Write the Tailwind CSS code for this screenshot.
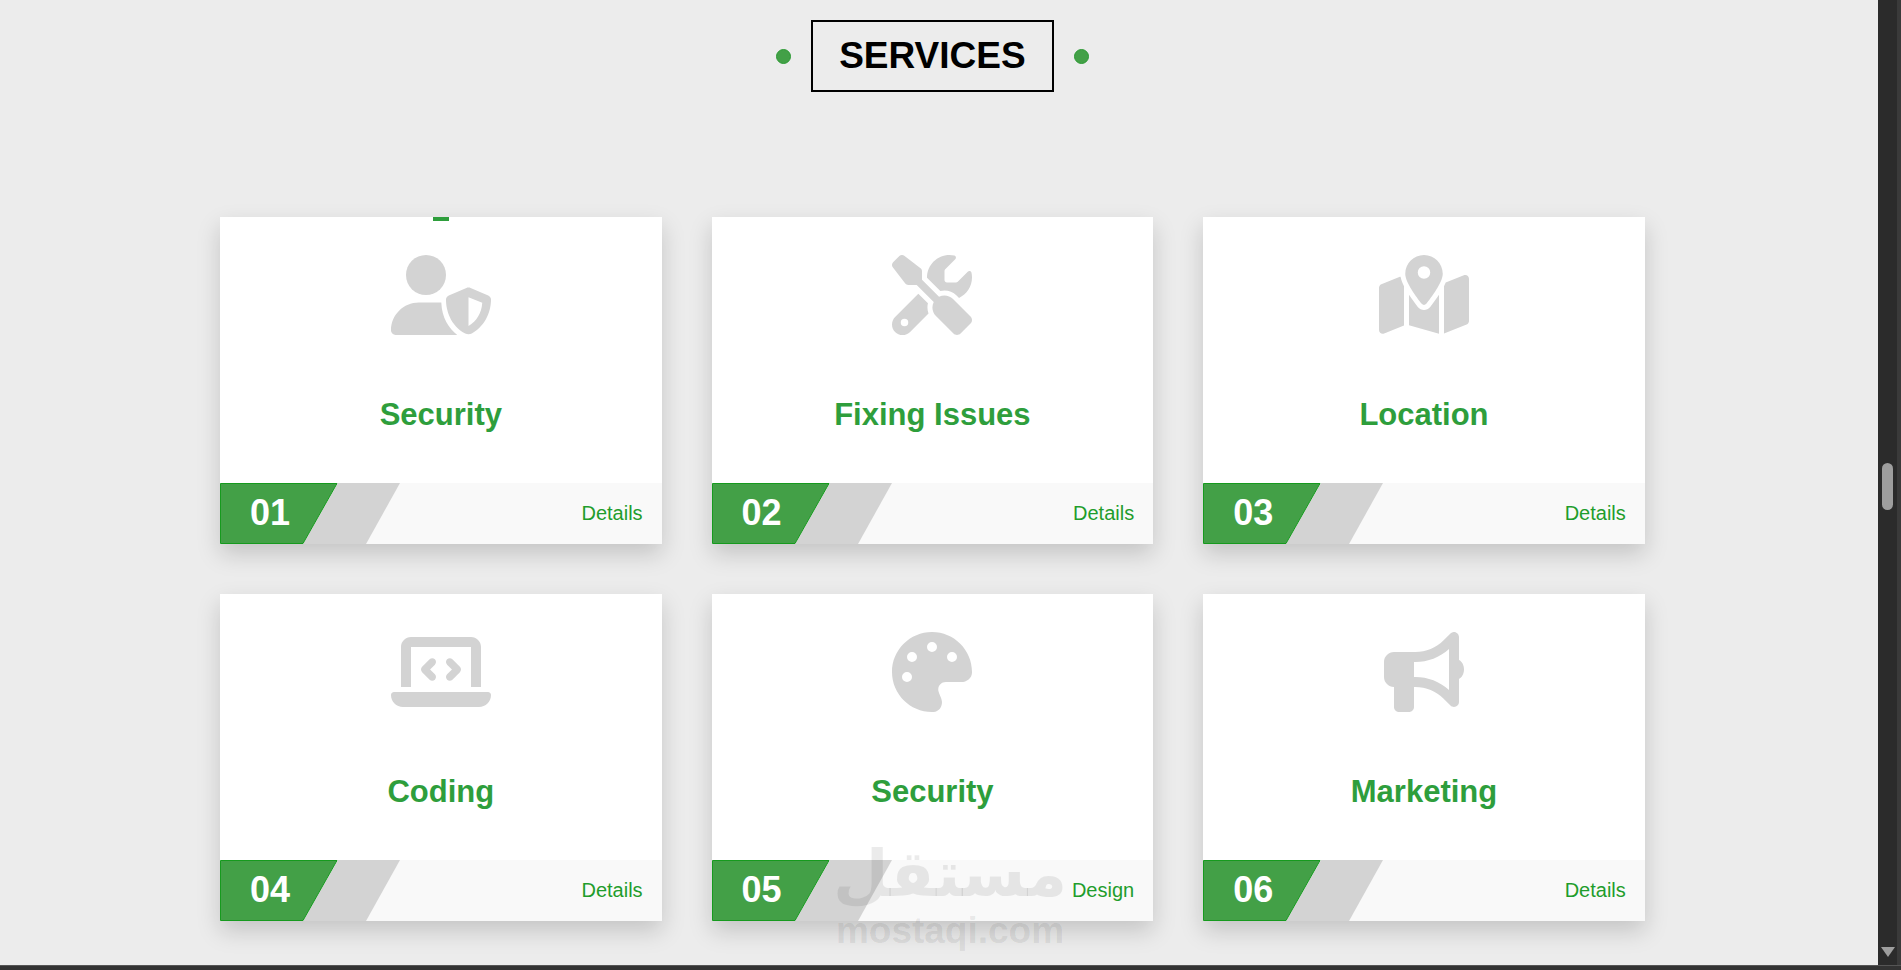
<!DOCTYPE html>
<html lang="en">
  <head>
    <meta charset="UTF-8">
    <meta name="viewport" content="width=device-width, initial-scale=1.0">
    <title>Services</title>
    <script src="https://cdn.jsdelivr.net/npm/@tailwindcss/browser@4"></script>
  </head>
  <body class="h-screen overflow-hidden flex flex-col bg-[#ececec] font-['Liberation_Sans',Arial,sans-serif]">
    <!-- shared footer badge -->
    <svg class="hidden">
      <symbol id="badge" viewBox="0 0 180 61">
        <polygon points="118,0 180,0 146,61 83,61" fill="#d3d3d3"></polygon>
        <polygon points="0.5,0.5 117,0.5 83,60.5 0.5,60.5" fill="#43a047" stroke="#169a1e"></polygon>
      </symbol>
    </svg>

    <div class="flex-1 flex min-h-0">
      <main class="relative flex-1 pl-[220px] pt-5">
        <!-- heading -->
        <div class="w-[1424.8px] flex items-center justify-center gap-5">
          <span class="w-[15px] h-[15px] rounded-full bg-[#43a047] border border-[#2b9a33]"></span>
          <h1 class="w-[243px] h-[72px] border-2 border-black flex items-center justify-center text-[37px] font-bold text-black">SERVICES</h1>
          <span class="w-[15px] h-[15px] rounded-full bg-[#43a047] border border-[#2b9a33]"></span>
        </div>

        <div class="mt-[125px] grid grid-cols-[repeat(3,441.6px)] auto-rows-[327px] gap-x-[50px] gap-y-[50px]">
          <!-- 01 -->
          <article class="relative bg-white flex flex-col items-center shadow-[0_10px_22px_rgba(0,0,0,0.17)]">
            <span class="absolute top-0 left-1/2 -translate-x-1/2 w-4 h-1 bg-[#2e9e3c]"></span>
            <svg class="mt-[38px] h-20 w-[100px] fill-[#d3d3d3]" viewBox="0 0 640 512">
              <circle cx="224" cy="128" r="128"></circle>
              <path d="M178.3 304C79.8 304 0 383.8 0 482.3 0 498.7 13.3 512 29.7 512H424C370 470 325 400 322 304Z"></path>
              <path fill-rule="evenodd" d="M496 208c4.600 0 9.200 1 13.400 2.900L622 259c11 4.700 18 15 18 27 0 60-25 160-123 216-13 7-29 7-42 0C378 450 352 350 352 286c0-12 7-22.300 18-27l112.600-48.100c4.200-1.900 8.800-2.900 13.400-2.900zM496 271v183c53-30 84-84 88-148z"></path>
            </svg>
            <h2 class="mt-[62px] text-[31px] leading-9 font-bold text-[#2e9e3c]">Security</h2>
            <div class="relative mt-auto w-full h-[61px] bg-[#f9f9f9] flex items-center justify-between pl-[30px] pr-[19px] pb-[2px]">
              <svg class="absolute left-0 top-0 w-[180px] h-[61px]"><use href="#badge"></use></svg>
              <span class="relative text-[36px] font-bold text-white">01</span>
              <a class="text-[20px] text-[#1f9d2c]">Details</a>
            </div>
          </article>

          <!-- 02 -->
          <article class="relative bg-white flex flex-col items-center shadow-[0_10px_22px_rgba(0,0,0,0.17)]">
            <svg class="mt-[38px] h-20 w-20 fill-[#d3d3d3]" viewBox="0 0 512 512">
              <path d="M78.6 5C69.1-2.4 55.6-1.5 47 7L7 47c-8.500 8.500-9.400 22-2.100 31.600l80 104c4.500 5.900 11.600 9.400 19 9.400h54.100l109 109c-14.700 29-10 65.400 14.300 89.600l112 112c12.500 12.500 32.800 12.500 45.300 0l64-64c12.500-12.500 12.500-32.800 0-45.300l-112-112c-24.200-24.200-60.600-29-89.600-14.300l-109-109V104c0-7.500-3.500-14.500-9.400-19L78.600 5zM19.900 396.100C7.200 408.800 0 426.100 0 444.100C0 481.600 30.400 512 67.900 512c18 0 35.300-7.200 48-19.900L233.700 374.300c-7.800-20.900-9-43.600-3.600-65.100l-61.700-61.700L19.900 396.100zM512 144c0-10.500-1.100-20.700-3.200-30.500c-2.400-11.200-16.100-14.100-24.200-6l-63.900 63.900c-3 3-7.100 4.700-11.300 4.700H352c-8.800 0-16-7.200-16-16V102.600c0-4.200 1.700-8.300 4.700-11.300l63.900-63.900c8.100-8.100 5.200-21.800-6-24.200C388.700 1.100 378.500 0 368 0C288.500 0 224 64.500 224 144l0 .8 85.300 85.300c36-9.100 75.800 .5 104 28.700L429 274.500c49-23 83-72.800 83-130.500zM56 432a24 24 0 1 1 48 0 24 24 0 1 1 -48 0z"></path>
            </svg>
            <h2 class="mt-[62px] text-[31px] leading-9 font-bold text-[#2e9e3c]">Fixing Issues</h2>
            <div class="relative mt-auto w-full h-[61px] bg-[#f9f9f9] flex items-center justify-between pl-[30px] pr-[19px] pb-[2px]">
              <svg class="absolute left-0 top-0 w-[180px] h-[61px]"><use href="#badge"></use></svg>
              <span class="relative text-[36px] font-bold text-white">02</span>
              <a class="text-[20px] text-[#1f9d2c]">Details</a>
            </div>
          </article>

          <!-- 03 -->
          <article class="relative bg-white flex flex-col items-center shadow-[0_10px_22px_rgba(0,0,0,0.17)]">
            <svg class="mt-[38px] h-20 w-[90px] fill-[#d3d3d3]" viewBox="0 0 576 512">
              <path d="M408 120c0 54.600-73.100 151.900-105.200 192c-7.700 9.600-22 9.600-29.600 0C241.100 271.900 168 174.600 168 120C168 53.700 221.700 0 288 0s120 53.700 120 120zm8 80.400c3.500-6.900 6.700-13.800 9.600-20.600c.5-1.200 1-2.500 1.500-3.700l116-46.400C558.900 123.400 576 135 576 152V422.800c0 9.800-6 18.600-15.100 22.300L416 503V200.400zM137.600 138.300c2.400 14.100 7.200 28.300 12.800 41.500c2.900 6.800 6.100 13.700 9.600 20.600V451.800L32.900 502.700C17.100 509 0 497.400 0 480.400V209.600c0-9.800 6-18.600 15.100-22.300l122.600-49zM327.800 332c13.900-17.400 35.700-45.700 56.200-77V504.300L192 449.400V255c20.500 31.300 42.300 59.600 56.200 77c20.500 25.600 59.100 25.600 79.600 0zM288 152a40 40 0 1 0 0-80 40 40 0 1 0 0 80z"></path>
            </svg>
            <h2 class="mt-[62px] text-[31px] leading-9 font-bold text-[#2e9e3c]">Location</h2>
            <div class="relative mt-auto w-full h-[61px] bg-[#f9f9f9] flex items-center justify-between pl-[30px] pr-[19px] pb-[2px]">
              <svg class="absolute left-0 top-0 w-[180px] h-[61px]"><use href="#badge"></use></svg>
              <span class="relative text-[36px] font-bold text-white">03</span>
              <a class="text-[20px] text-[#1f9d2c]">Details</a>
            </div>
          </article>

          <!-- 04 -->
          <article class="relative bg-white flex flex-col items-center shadow-[0_10px_22px_rgba(0,0,0,0.17)]">
            <svg class="mt-[38px] h-20 w-[100px] fill-[#d3d3d3]" viewBox="0 0 640 512">
              <path d="M64 96c0-35.300 28.700-64 64-64H512c35.300 0 64 28.700 64 64V352H512V96H128V352H64V96zM0 403.200C0 392.600 8.600 384 19.200 384H620.800c10.600 0 19.200 8.600 19.200 19.200c0 42.400-34.400 76.800-76.800 76.800H76.800C34.400 480 0 445.600 0 403.200zM281 209l-31 31 31 31c9.400 9.400 9.400 24.600 0 33.900s-24.600 9.400-33.900 0l-48-48c-9.400-9.400-9.400-24.600 0-33.900l48-48c9.400-9.400 24.600-9.400 33.900 0s9.400 24.600 0 33.900zM393 175l48 48c9.400 9.400 9.400 24.600 0 33.900l-48 48c-9.400 9.400-24.600 9.400-33.900 0s-9.400-24.600 0-33.900l31-31-31-31c-9.400-9.400-9.400-24.600 0-33.900s24.600-9.400 33.900 0z"></path>
            </svg>
            <h2 class="mt-[62px] text-[31px] leading-9 font-bold text-[#2e9e3c]">Coding</h2>
            <div class="relative mt-auto w-full h-[61px] bg-[#f9f9f9] flex items-center justify-between pl-[30px] pr-[19px] pb-[2px]">
              <svg class="absolute left-0 top-0 w-[180px] h-[61px]"><use href="#badge"></use></svg>
              <span class="relative text-[36px] font-bold text-white">04</span>
              <a class="text-[20px] text-[#1f9d2c]">Details</a>
            </div>
          </article>

          <!-- 05 -->
          <article class="relative bg-white flex flex-col items-center shadow-[0_10px_22px_rgba(0,0,0,0.17)]">
            <svg class="mt-[38px] h-20 w-20 fill-[#d3d3d3]" viewBox="0 0 512 512">
              <path d="M512 256c0 .9 0 1.800 0 2.700c-.4 36.500-33.600 61.300-70.100 61.300H344c-26.500 0-48 21.500-48 48c0 3.400 .4 6.700 1 9.900c2.100 10.200 6.500 20 10.800 29.900c6.100 13.800 12.100 27.500 12.100 42c0 31.800-21.600 60.700-53.400 62c-3.500 .1-7 .2-10.600 .2C114.600 512 0 397.400 0 256S114.600 0 256 0S512 114.600 512 256zM128 288a32 32 0 1 0 -64 0 32 32 0 1 0 64 0zm0-96a32 32 0 1 0 0-64 32 32 0 1 0 0 64zM288 96a32 32 0 1 0 -64 0 32 32 0 1 0 64 0zm96 96a32 32 0 1 0 0-64 32 32 0 1 0 0 64z"></path>
            </svg>
            <h2 class="mt-[62px] text-[31px] leading-9 font-bold text-[#2e9e3c]">Security</h2>
            <div class="relative mt-auto w-full h-[61px] bg-[#f9f9f9] flex items-center justify-between pl-[30px] pr-[19px] pb-[2px]">
              <svg class="absolute left-0 top-0 w-[180px] h-[61px]"><use href="#badge"></use></svg>
              <span class="relative text-[36px] font-bold text-white">05</span>
              <a class="text-[20px] text-[#1f9d2c]">Design</a>
            </div>
          </article>

          <!-- 06 -->
          <article class="relative bg-white flex flex-col items-center shadow-[0_10px_22px_rgba(0,0,0,0.17)]">
            <svg class="mt-[38px] h-20 w-20 fill-[#d3d3d3]" viewBox="0 0 512 512">
              <path d="M480 32c0-12.900-7.800-24.600-19.800-29.600s-25.700-2.200-34.900 6.900L381.700 53c-48 48-113.100 75-181 75H192 160 64c-35.300 0-64 28.700-64 64v96c0 35.300 28.700 64 64 64l0 128c0 17.700 14.300 32 32 32h64c17.700 0 32-14.300 32-32V352l8.700 0c67.900 0 133 27 181 75l43.600 43.600c9.200 9.200 22.900 11.900 34.900 6.900s19.800-16.600 19.800-29.600V300.400c18.600-8.800 32-32.500 32-60.400s-13.400-51.600-32-60.400V32zm-64 76.700V240 371.300C357.200 317.800 280.500 288 200.700 288H192V192h8.700c79.800 0 156.500-29.800 215.300-83.300z"></path>
            </svg>
            <h2 class="mt-[62px] text-[31px] leading-9 font-bold text-[#2e9e3c]">Marketing</h2>
            <div class="relative mt-auto w-full h-[61px] bg-[#f9f9f9] flex items-center justify-between pl-[30px] pr-[19px] pb-[2px]">
              <svg class="absolute left-0 top-0 w-[180px] h-[61px]"><use href="#badge"></use></svg>
              <span class="relative text-[36px] font-bold text-white">06</span>
              <a class="text-[20px] text-[#1f9d2c]">Details</a>
            </div>
          </article>
        </div>

        <!-- site watermark -->
        <div class="absolute left-[836px] top-[841px] w-[228px] flex flex-col items-center gap-[6px] text-black/8 pointer-events-none">
          <span class="text-[64px] leading-[66px] font-bold font-['DejaVu_Sans',sans-serif]" dir="rtl">مستقل</span>
          <span class="text-[37px] leading-[36px] font-bold">mostaqi.com</span>
        </div>
      </main>

      <!-- scrollbar -->
      <aside class="relative w-[23px] bg-[#2b2b2b] border-r-4 border-[#3a3a3a] flex flex-col items-center">
        <div class="absolute top-[463px] left-1 w-[11px] h-[47px] rounded-full bg-[#9e9e9e]"></div>
        <div class="absolute top-[947px] left-[3px] w-0 h-0 border-x-[7px] border-x-transparent border-t-[10px] border-t-[#9e9e9e]"></div>
      </aside>
    </div>
    <div class="h-[5px] bg-[#333333] border-t border-[#555555]"></div>
  </body>
</html>
